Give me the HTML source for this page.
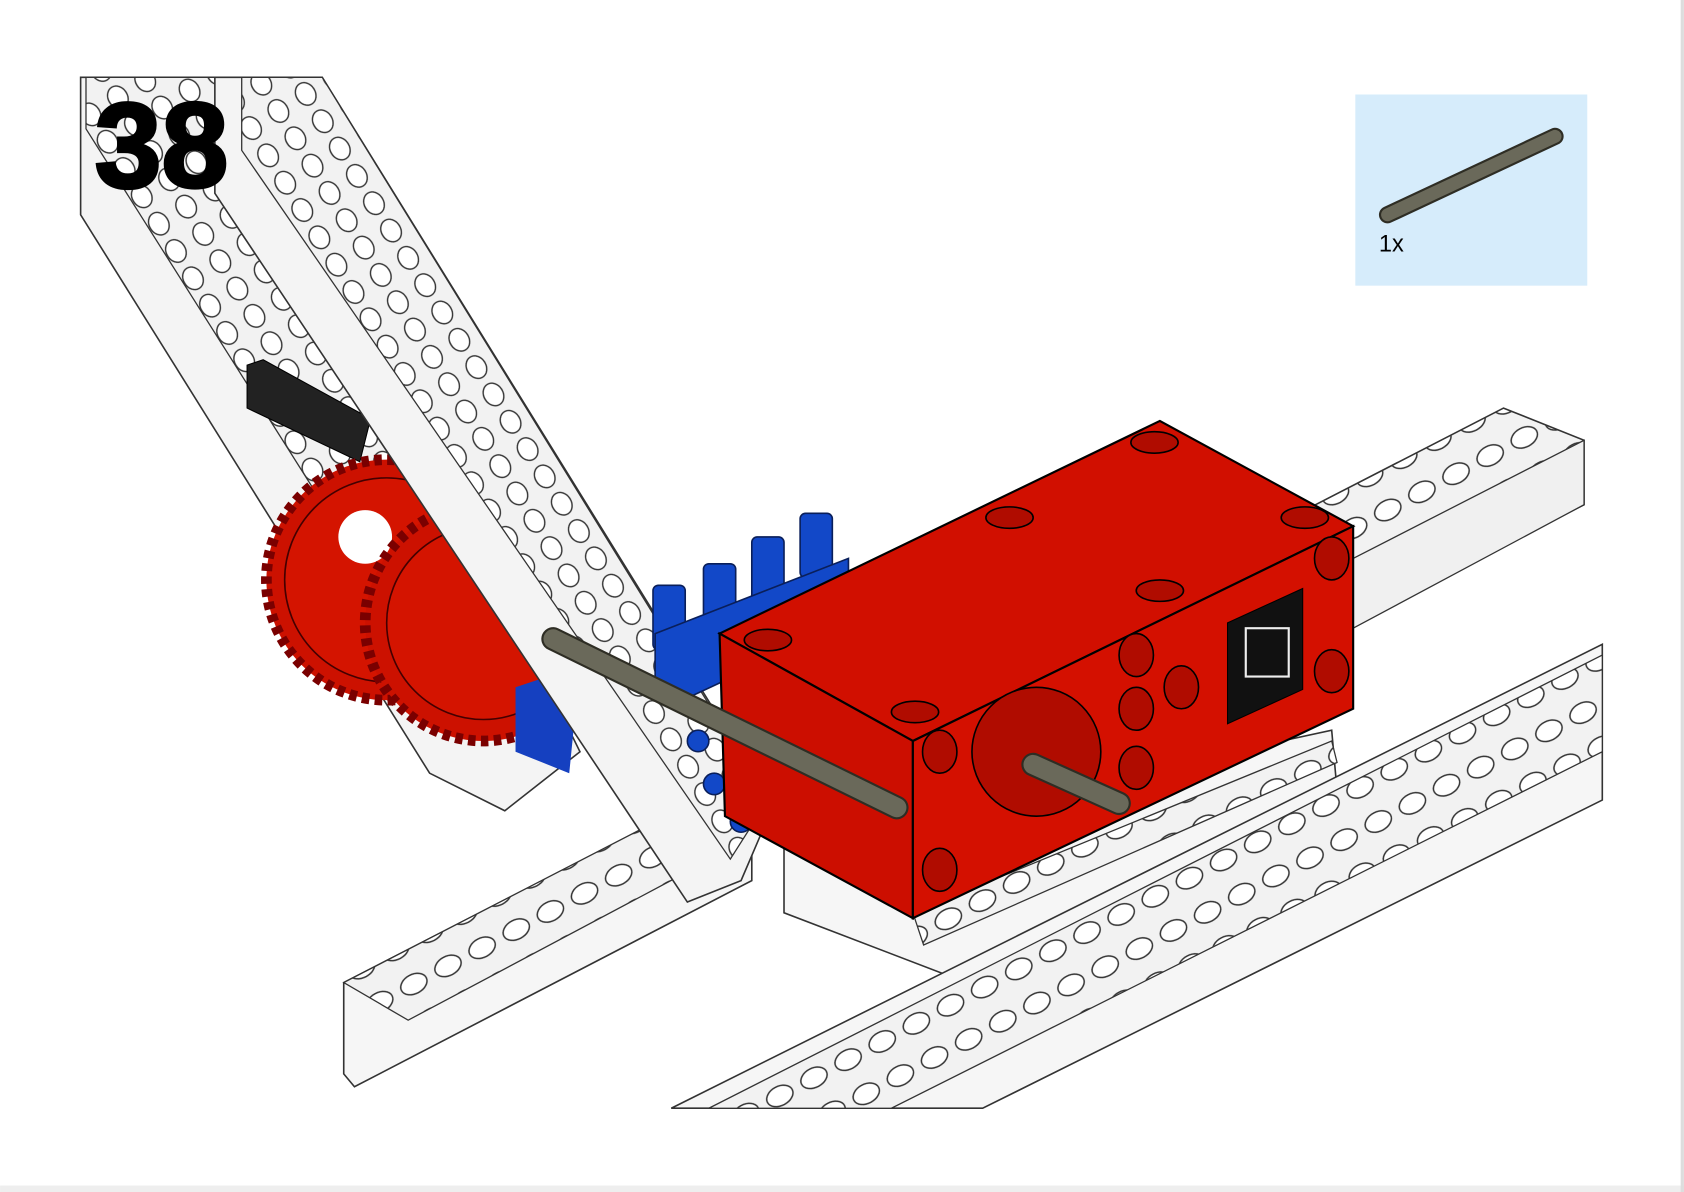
<!DOCTYPE html>
<html><head><meta charset="utf-8"><style>
html,body{margin:0;padding:0;background:#fff;width:1684px;height:1192px;overflow:hidden}
svg{display:block}
</style></head><body>
<svg width="1684" height="1192" viewBox="0 0 1568 1110" xmlns="http://www.w3.org/2000/svg">
<defs>
<pattern id="holes2" width="36" height="36" patternUnits="userSpaceOnUse" patternTransform="rotate(-28)">
<rect width="36" height="36" fill="#f2f2f2"/>
<ellipse cx="18" cy="18" rx="13" ry="9" fill="#fff" stroke="#333" stroke-width="1.4"/>
</pattern>
<pattern id="holes3" width="30" height="30" patternUnits="userSpaceOnUse" patternTransform="rotate(58)">
<rect width="30" height="30" fill="#f2f2f2"/>
<ellipse cx="15" cy="15" rx="11" ry="9" fill="#fff" stroke="#333" stroke-width="1.3"/>
</pattern>
</defs>
<rect width="1568" height="1110" fill="#fff"/>
<rect x="0" y="1104" width="1568" height="6" fill="#eee"/>
<rect x="1565" y="0" width="3" height="1110" fill="#ddd"/>

<polygon points="1225,470 1400,380 1475,410 1475,470 1260,580 1225,560" fill="url(#holes2)" stroke="#333" stroke-width="1.5"/>
<polygon points="1260,520 1475,410 1475,470 1260,585" fill="#f0f0f0" stroke="#333" stroke-width="1.2"/>

<polygon points="320,915 700,720 700,820 330,1012 320,1000" fill="#f6f6f6" stroke="#333" stroke-width="1.5"/>
<polygon points="320,915 640,750 700,780 380,950" fill="url(#holes2)" stroke="#333" stroke-width="1.2"/>
<polygon points="730,790 1240,680 1248,770 900,915 730,850" fill="#f6f6f6" stroke="#333" stroke-width="1.5"/>
<polygon points="850,850 1240,690 1245,710 860,880" fill="url(#holes2)" stroke="#333" stroke-width="1.2"/>

<polygon points="625,1032 1492,600 1492,745 915,1032" fill="#f6f6f6" stroke="#333" stroke-width="1.5"/>
<polygon points="660,1032 1492,610 1492,700 830,1032" fill="url(#holes2)" stroke="#333" stroke-width="1.2"/>

<polygon points="75,72 230,72 540,700 470,755 400,720 75,200" fill="#f4f4f4" stroke="#333" stroke-width="1.5"/>
<polygon points="80,72 225,72 500,640 440,690 80,120" fill="url(#holes3)" stroke="#333" stroke-width="1.2"/>

<polygon points="230,340 245,335 345,390 335,430 230,380" fill="#222" stroke="#000"/>

<circle cx="360" cy="540" r="112" fill="#cc1100" stroke="#7a0000" stroke-width="10" stroke-dasharray="7 5"/>
<circle cx="360" cy="540" r="95" fill="#d41400" stroke="#400" stroke-width="1.5"/>
<circle cx="340" cy="500" r="25" fill="#fff"/>
<circle cx="450" cy="580" r="110" fill="#cc1100" stroke="#7a0000" stroke-width="10" stroke-dasharray="7 5"/>
<circle cx="450" cy="580" r="90" fill="#d41400" stroke="#400" stroke-width="1.5"/>
<polygon points="480,640 540,620 530,720 480,700" fill="#1540c0"/>

<polygon points="200,72 300,72 720,750 690,820 640,840 200,180" fill="#f4f4f4" stroke="#333" stroke-width="1.5"/>
<polygon points="225,72 300,72 715,745 680,800 225,140" fill="url(#holes3)" stroke="#333" stroke-width="1.2"/>

<g fill="#1248c8" stroke="#0a1f5a" stroke-width="1.5">
<rect x="608" y="545" width="30" height="60" rx="5"/>
<rect x="655" y="525" width="30" height="60" rx="5"/>
<rect x="700" y="500" width="30" height="60" rx="5"/>
<rect x="745" y="478" width="30" height="60" rx="5"/>
<polygon points="610,590 790,520 790,580 640,650 610,640"/>
<circle cx="650" cy="690" r="10"/><circle cx="665" cy="730" r="10"/><circle cx="690" cy="765" r="10"/>
</g>

<polygon points="670,590 1080,392 1260,490 850,690" fill="#d10f00" stroke="#000" stroke-width="2"/>
<polygon points="670,590 850,690 850,855 675,760" fill="#cc0e00" stroke="#000" stroke-width="2"/>
<polygon points="850,690 1260,490 1260,660 850,855" fill="#d41000" stroke="#000" stroke-width="2"/>
<g fill="#b00c00" stroke="#000" stroke-width="1.5">
<ellipse cx="1075" cy="412" rx="22" ry="10"/><ellipse cx="1215" cy="482" rx="22" ry="10"/>
<ellipse cx="940" cy="482" rx="22" ry="10"/><ellipse cx="1080" cy="550" rx="22" ry="10"/>
<ellipse cx="715" cy="596" rx="22" ry="10"/><ellipse cx="852" cy="663" rx="22" ry="10"/>
<circle cx="965" cy="700" r="60"/>
<ellipse cx="1058" cy="610" rx="16" ry="20"/><ellipse cx="1100" cy="640" rx="16" ry="20"/>
<ellipse cx="1058" cy="660" rx="16" ry="20"/><ellipse cx="1058" cy="715" rx="16" ry="20"/>
<ellipse cx="1240" cy="520" rx="16" ry="20"/><ellipse cx="1240" cy="625" rx="16" ry="20"/>
<ellipse cx="875" cy="700" rx="16" ry="20"/><ellipse cx="875" cy="810" rx="16" ry="20"/>
</g>
<polygon points="1143,580 1213,548 1213,642 1143,674" fill="#111" stroke="#000"/>
<rect x="1160" y="585" width="40" height="45" fill="none" stroke="#eee" stroke-width="2"/>

<line x1="515" y1="595" x2="835" y2="752" stroke="#2e2d24" stroke-width="22" stroke-linecap="round"/>
<line x1="515" y1="595" x2="835" y2="752" stroke="#6a695a" stroke-width="18" stroke-linecap="round"/>
<line x1="962" y1="712" x2="1042" y2="748" stroke="#2e2d24" stroke-width="22" stroke-linecap="round"/>
<line x1="962" y1="712" x2="1042" y2="748" stroke="#6a695a" stroke-width="18" stroke-linecap="round"/>

<text x="88" y="174" font-family="Liberation Sans, sans-serif" font-weight="bold" font-size="112" fill="#000" stroke="#000" stroke-width="3">38</text>

<rect x="1262" y="88" width="216" height="178" fill="#d6ecfb"/>
<line x1="1292" y1="200" x2="1448" y2="127" stroke="#2e2d24" stroke-width="16" stroke-linecap="round"/>
<line x1="1292" y1="200" x2="1448" y2="127" stroke="#6a695a" stroke-width="12" stroke-linecap="round"/>
<text x="1284" y="234" font-family="Liberation Sans, sans-serif" font-size="22" fill="#000">1x</text>
</svg>
</body></html>
